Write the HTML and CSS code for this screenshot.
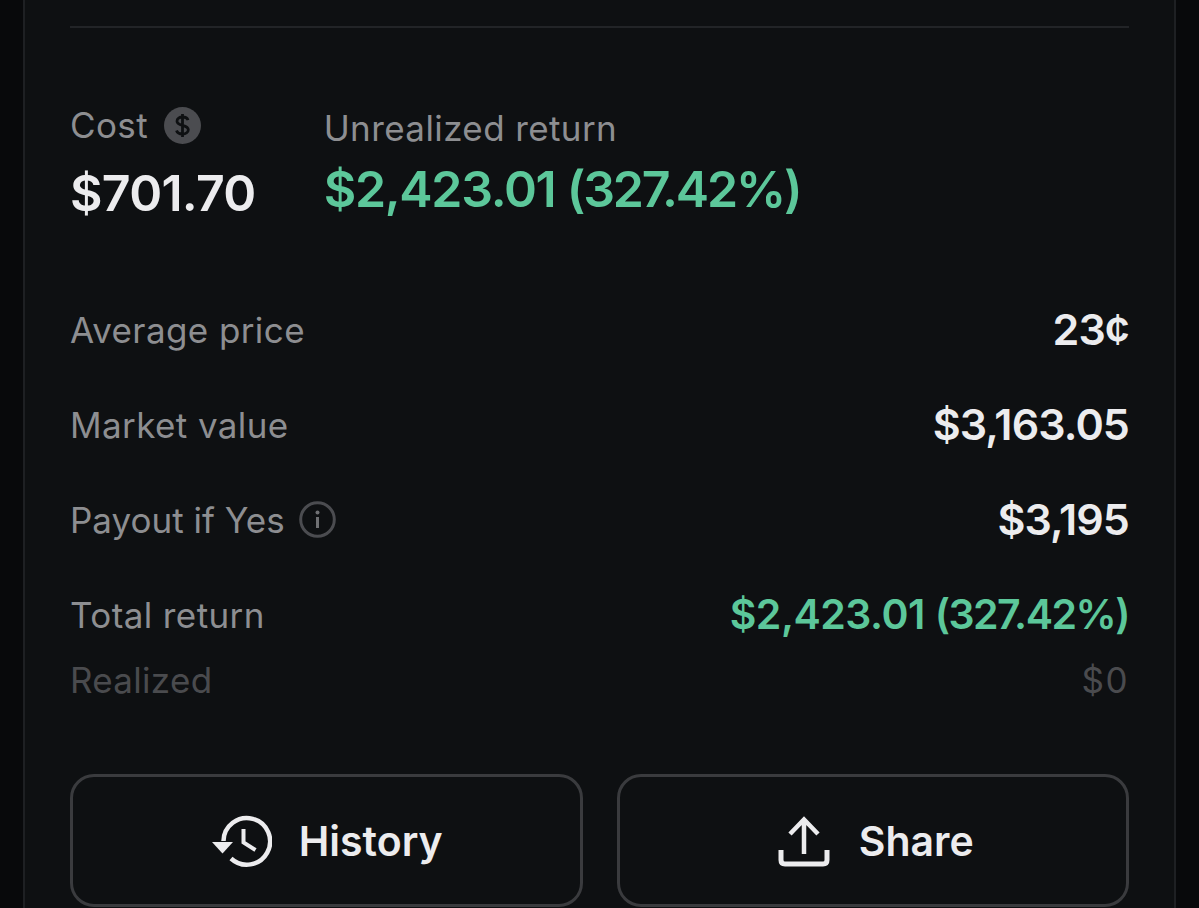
FILE: index.html
```html
<!DOCTYPE html>
<html lang="en">
<head>
<meta charset="utf-8">
<title>Position</title>
<link rel="stylesheet" href="styles.css">
</head>
<body>
<main class="card">
  <hr class="divider">
  <section class="summary">
    <div class="cost">
      <div class="label cost-label">Cost
        <svg class="dollar" viewBox="0 0 37 37" aria-hidden="true"><circle cx="18.5" cy="18.5" r="18.5" fill="#4b4c50"/><path d="M24 13.2c-.6-2-2.800-3.200-5.500-3.200-3 0-5.500 1.500-5.500 4.200 0 5.500 11.300 3 11.300 8.600 0 2.700-2.700 4.200-5.800 4.200-2.900 0-5.300-1.300-6-3.500M18.500 7v23" fill="none" stroke="#0e1012" stroke-width="2.800"/></svg>
      </div>
      <div class="big">$701.70</div>
    </div>
    <div class="unrealized">
      <div class="label">Unrealized return</div>
      <div class="big green">$2,423.01 <span class="pct">(327.42%)</span></div>
    </div>
  </section>
  <section class="rows">
    <div class="row"><span class="label">Average price</span><span class="value">23¢</span></div>
    <div class="row"><span class="label">Market value</span><span class="value">$3,163.05</span></div>
    <div class="row"><span class="label payout">Payout if Yes
      <svg class="info" viewBox="0 0 37 37" aria-hidden="true"><circle cx="18.500" cy="18.500" r="16.800" fill="none" stroke="#4b4c50" stroke-width="3"/><path d="M18.500 16v11" stroke="#6f7073" stroke-width="3"/><circle cx="18.500" cy="11.500" r="2" fill="#6f7073"/></svg>
    </span><span class="value">$3,195</span></div>
    <div class="row"><span class="label">Total return</span><span class="value total green">$2,423.01 <span class="pct">(327.42%)</span></span></div>
    <div class="row sub"><span>Realized</span><span class="sub-value">$0</span></div>
  </section>
  <section class="actions">
    <button class="btn btn-history" type="button">
      <svg class="btn-icon history" viewBox="0 0 60 52" aria-hidden="true"><path d="M11.500 26A23.300 23.300 0 1 1 19 43.500" fill="none" stroke="#ececee" stroke-width="4.500"/><path d="M0 27h21L10.500 38.500z" fill="#ececee"/><path d="M31.500 14v13.500l12 7.500" fill="none" stroke="#ececee" stroke-width="4"/></svg>
      History
    </button>
    <button class="btn btn-share" type="button">
      <svg class="btn-icon share" viewBox="0 0 52 52" aria-hidden="true"><path d="M26 39V4M12 19 26 4.500 40 19" fill="none" stroke="#ececee" stroke-width="4.500"/><path d="M3 35v10q0 4 4 4h38q4 0 4-4V35" fill="none" stroke="#ececee" stroke-width="5"/></svg>
      Share
    </button>
  </section>
</main>
</body>
</html>
```
FILE: styles.css
```css
* { box-sizing: border-box; }
html, body { margin: 0; height: 908px; overflow: hidden; background: #08090b; }
body { font-family: Inter, "Liberation Sans", sans-serif; }
.card {
  width: 1153px;
  height: 908px;
  margin-left: 23px;
  padding: 26px 45px 0 45px;
  background: #0e1012;
  border-left: 2px solid #1e2023;
  border-right: 2px solid #1e2023;
}
.divider { margin: 0; border: 0; height: 2px; background: #222427; }
.label { font-size: 35px; line-height: 44px; color: #8d8e91; letter-spacing: .4px; }
.summary { display: flex; gap: 68px; margin-top: 75px; }
.cost-label { display: flex; align-items: center; gap: 16px; height: 44px; }
.dollar { width: 37px; height: 37px; }
.unrealized .label { margin-top: 3px; }
.big { font-size: 50px; line-height: 60px; font-weight: 600; color: #ececee; letter-spacing: -.7px; margin-top: 16px; }
.unrealized .big { margin-top: 9px; letter-spacing: -1.3px; }
.green { color: #5cc79a; }
.pct { letter-spacing: -2.2px; }
.rows { display: flex; flex-direction: column; margin-top: 58px; }
.row { display: flex; justify-content: space-between; align-items: center; height: 95px; }
.row > .label { padding-top: 2px; }
.value { font-size: 43px; font-weight: 600; color: #ececee; letter-spacing: -.9px; }
.value.green { color: #5cc79a; }
.total { font-size: 41px; letter-spacing: -.5px; }
.total .pct { letter-spacing: -1.5px; }
.payout { display: flex; align-items: center; gap: 14px; letter-spacing: 0; }
.info { width: 37px; height: 37px; }
.sub { height: 34px; margin-top: 2px; font-size: 35px; color: #4a4b4e; letter-spacing: .3px; }
.sub-value { letter-spacing: 1.5px; }
.actions { display: grid; grid-template-columns: 1fr 1fr; gap: 34px; margin-top: 77px; }
.btn {
  display: flex; align-items: center; justify-content: center; gap: 28px;
  height: 133px;
  padding-top: 1px;
  background: transparent;
  border: 3px solid #3a3b3e;
  border-radius: 24px;
  color: #ececee;
  font-family: inherit; font-size: 41px; font-weight: 600;
}
.btn-history { gap: 27px; padding-left: 8px; }
.btn-share { gap: 29px; padding-left: 12px; }
.btn-icon { height: 52px; }
.history { width: 60px; }
.share { width: 52px; }
```
